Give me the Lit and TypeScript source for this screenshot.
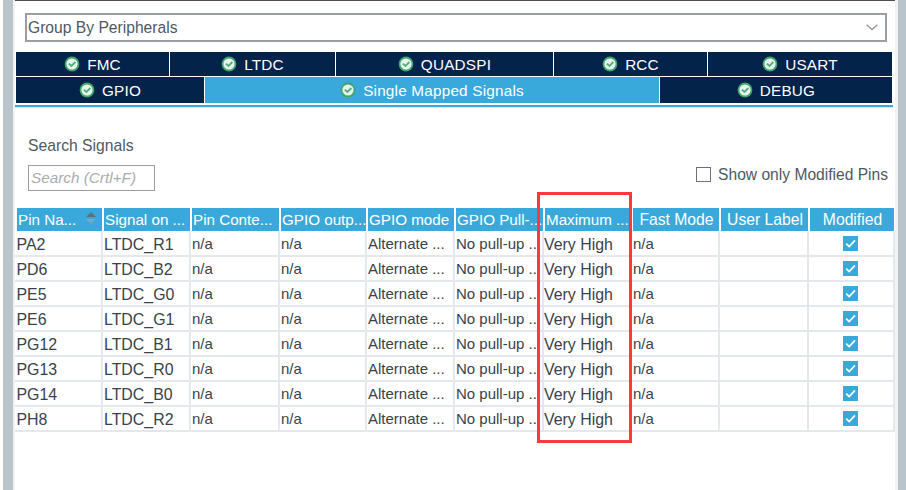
import { LitElement, html, css, svg } from 'lit';
import { customElement } from 'lit/decorators.js';

const topTabs = [
  { name: 'FMC', width: 153 },
  { name: 'LTDC', width: 165 },
  { name: 'QUADSPI', width: 217 },
  { name: 'RCC', width: 153 },
  { name: 'USART', width: 184 },
];
const bottomTabs = [
  { name: 'GPIO', width: 188, active: false },
  { name: 'Single Mapped Signals', width: 454, active: true },
  { name: 'DEBUG', width: 232, active: false },
];
const columns = ['Pin Na...', 'Signal on ...', 'Pin Conte...', 'GPIO outp...', 'GPIO mode', 'GPIO Pull-...', 'Maximum ...', 'Fast Mode', 'User Label', 'Modified'];
const rows = [
  ['PA2', 'LTDC_R1'],
  ['PD6', 'LTDC_B2'],
  ['PE5', 'LTDC_G0'],
  ['PE6', 'LTDC_G1'],
  ['PG12', 'LTDC_B1'],
  ['PG13', 'LTDC_R0'],
  ['PG14', 'LTDC_B0'],
  ['PH8', 'LTDC_R2'],
];
const colWidths = [88, 88, 89, 87, 88, 89, 88, 88, 89, 86];

const okIcon = svg`
  <svg class="ok" viewBox="0 0 16 16" width="16" height="16">
    <circle cx="8" cy="8" r="7.4" fill="#3fa66b"/>
    <circle cx="8" cy="8" r="5.6" fill="#e9f3ee"/>
    <path d="M4.8 7.6 7.4 10 11.4 6" fill="none" stroke="#4fae79" stroke-width="1.8"/>
  </svg>`;

@customElement('app-root')
export class AppRoot extends LitElement {
  static styles = css`
    :host {
      display: block;
      width: 906px;
      height: 490px;
      overflow: hidden;
      background: #fff;
      font-family: 'Liberation Sans', Arial, sans-serif;
      font-size: 15.3px;
      color: #39424a;
    }
    .shell {
      position: relative;
      display: flex;
      height: 490px;
    }
    .gutter-left {
      width: 10px;
      margin-left: 3px;
      background: #b9c4cb;
      border-right: 2px solid #f1f3f4;
    }
    .gutter-right {
      width: 8px;
      margin-left: 3px;
      background: #b9c4cb;
      box-shadow: -3px 0 0 #f1f3f4;
    }
    .panel {
      width: 880px;
      border-top: 1px solid #4a4d50;
      display: flex;
      flex-direction: column;
    }
    .select {
      box-sizing: border-box;
      display: flex;
      align-items: center;
      justify-content: space-between;
      height: 29px;
      margin: 12px 8px 10px 10px;
      padding: 0 7px 0 1px;
      border: 2px solid #9a9ea1;
      color: #4d5963;
      font-size: 15.65px;
    }
    .tabs {
      display: flex;
      flex-direction: column;
      gap: 1px;
      margin-left: 1px;
      width: 876px;
    }
    .tab-row {
      display: flex;
      gap: 1px;
      height: 24px;
    }
    .tab-row.second {
      height: 26px;
    }
    .tab {
      display: flex;
      align-items: center;
      justify-content: center;
      gap: 7px;
      padding-top: 1px;
      box-sizing: border-box;
      background: #03234b;
      color: #fff;
      letter-spacing: 0.2px;
    }
    .tab.active {
      background: #39a9dc;
    }
    .ok {
      flex: none;
      margin-top: -1px;
    }
    .tab-line {
      margin-top: 1px;
      margin-right: -1px;
      margin-left: -1px;
      height: 2px;
      border-bottom: 1px solid #d4ecf7;
      background: #39a9dc;
    }
    .filters {
      display: flex;
      justify-content: space-between;
      height: 100px;
    }
    .search {
      padding: 29px 0 0 13px;
    }
    .search-label {
      line-height: 17px;
      color: #4d5963;
      font-size: 15.7px;
    }
    .search-box {
      box-sizing: border-box;
      width: 127px;
      height: 26px;
      margin-top: 11px;
      padding-left: 2px;
      border: 1px solid #9a9ea1;
      color: #a9adb0;
      font-style: italic;
      line-height: 24px;
    }
    .only-modified {
      display: flex;
      align-items: center;
      gap: 7px;
      align-self: flex-start;
      margin: 58px 7px 0 0;
      line-height: 17px;
      color: #4d5963;
      font-size: 15.6px;
    }
    .checkbox {
      box-sizing: border-box;
      width: 15px;
      height: 15px;
      border: 1.5px solid #6d7276;
    }
    table {
      border-collapse: separate;
      border-spacing: 0;
      table-layout: fixed;
      width: 880px;
    }
    th {
      padding: 0 0 1px;
      height: 24px;
      box-sizing: border-box;
      background: #39a9dc;
      background-clip: padding-box;
      border-left: 1px solid #fff;
      border-right: 1px solid #fff;
      border-bottom: 1px solid #fff;
      color: #fff;
      font-weight: 400;
      font-size: 15.2px;
      text-align: left;
      white-space: nowrap;
      overflow: hidden;
      position: relative;
    }
    th:first-child {
      border-left-width: 2px;
    }
    th span {
      padding-left: 1px;
    }
    th.center {
      padding: 1px 0 0;
      font-size: 15.7px;
      text-align: center;
    }
    td {
      box-sizing: border-box;
      height: 25px;
      padding: 0 0 0 1px;
      border-right: 2px solid #e4e8ec;
      border-bottom: 2px solid #e4e8ec;
      white-space: nowrap;
      overflow: hidden;
      color: #39424a;
      font-size: 15px;
    }
    td.wide {
      padding-top: 2px;
      font-size: 15.9px;
    }
    td.speed {
      padding-left: 0;
    }
    td:first-child {
      padding-left: 1.5px;
    }
    td.center {
      padding: 0 2px 0 0;
    }
    .sort {
      position: absolute;
      right: 6px;
      top: 4px;
    }
    .tick {
      display: block;
      margin: 0 auto;
    }
    .highlight {
      position: absolute;
      left: 537px;
      top: 192px;
      box-sizing: border-box;
      width: 95px;
      height: 251px;
      border: 3px solid #f93a3d;
      pointer-events: none;
    }
  `;

  renderCheck() {
    return svg`
      <svg class="tick" viewBox="0 0 15 15" width="15" height="15">
        <rect width="15" height="15" fill="#39a9dc"/>
        <path d="M3.2 7.6 6.2 10.6 12 4.4" fill="none" stroke="#fff" stroke-width="1.7"/>
      </svg>`;
  }

  render() {
    return html`
      <div class="shell">
        <div class="gutter-left"></div>
        <div class="panel">
          <div class="select">
            <span>Group By Peripherals</span>
            <svg viewBox="0 0 12 7" width="12" height="7">
              <path d="M.7.7 6 5.6 11.3.7" fill="none" stroke="#8a8e91" stroke-width="1.2"/>
            </svg>
          </div>
          <div class="tabs">
            <div class="tab-row">
              ${topTabs.map(t => html`<div class="tab" style="width:${t.width}px">${okIcon}<span>${t.name}</span></div>`)}
            </div>
            <div class="tab-row second">
              ${bottomTabs.map(t => html`<div class="tab ${t.active ? 'active' : ''}" style="width:${t.width}px">${okIcon}<span>${t.name}</span></div>`)}
            </div>
            <div class="tab-line"></div>
          </div>
          <div class="filters">
            <div class="search">
              <div class="search-label">Search Signals</div>
              <div class="search-box">Search (Crtl+F)</div>
            </div>
            <div class="only-modified">
              <span class="checkbox"></span>
              <span>Show only Modified Pins</span>
            </div>
          </div>
          <table>
            <colgroup>
              ${colWidths.map(w => html`<col style="width:${w}px" />`)}
            </colgroup>
            <thead>
              <tr>
                ${columns.map((c, i) => html`<th class="${i > 6 ? 'center' : ''}"><span>${c}</span>${i === 0
                  ? svg`<svg class="sort" viewBox="0 0 10 12" width="10" height="12">
                      <path d="M5 0 10 5H0Z" fill="#5f6f7a"/><path d="M0 7H10L5 12Z" fill="#6dabc9"/>
                    </svg>`
                  : ''}</th>`)}
              </tr>
            </thead>
            <tbody>
              ${rows.map(r => html`
                <tr>
                  <td class="wide">${r[0]}</td>
                  <td class="wide">${r[1]}</td>
                  <td>n/a</td>
                  <td>n/a</td>
                  <td>Alternate ...</td>
                  <td>No pull-up ...</td>
                  <td class="wide speed">Very High</td>
                  <td>n/a</td>
                  <td></td>
                  <td class="center">${this.renderCheck()}</td>
                </tr>`)}
            </tbody>
          </table>
        </div>
        <div class="gutter-right"></div>
        <div class="highlight"></div>
      </div>
    `;
  }
}
